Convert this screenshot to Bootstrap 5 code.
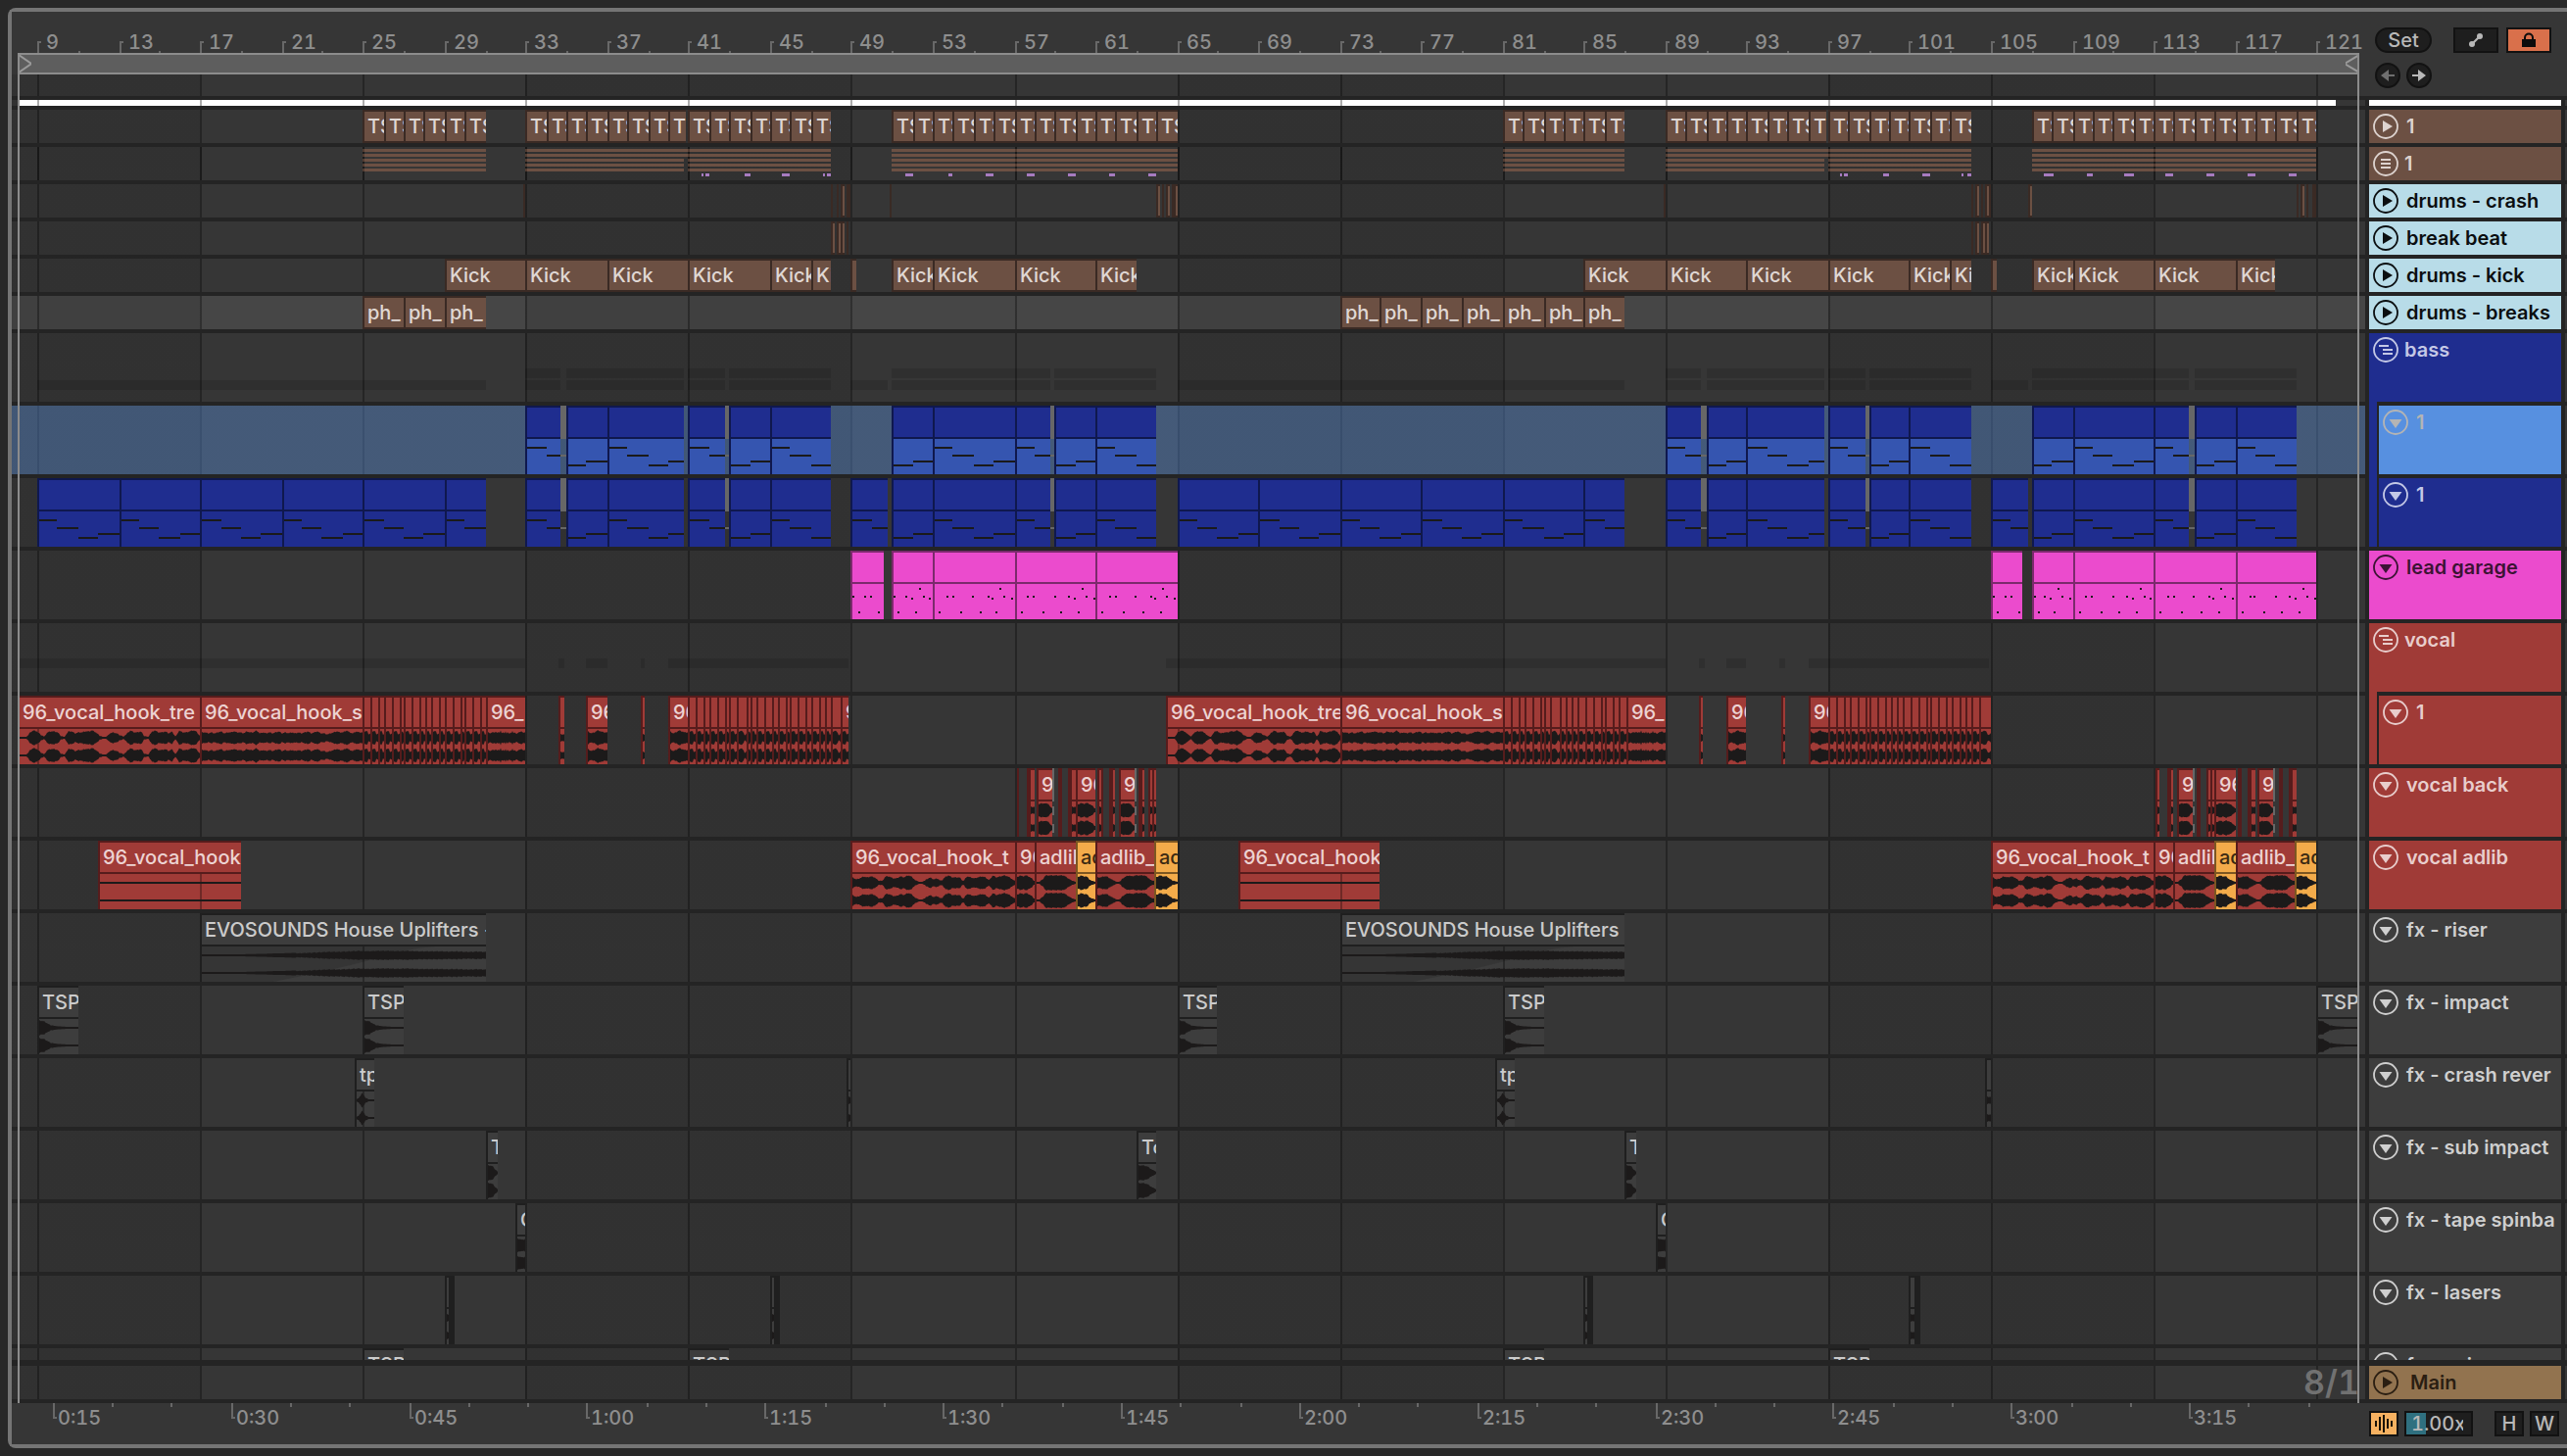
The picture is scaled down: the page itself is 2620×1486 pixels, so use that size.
<!DOCTYPE html>
<html lang="en">
<head>
<meta charset="utf-8">
<meta name="viewport" content="width=device-width, initial-scale=1">
<title>Arrangement</title>
<link rel="stylesheet" href="https://cdn.jsdelivr.net/npm/bootstrap@5.3.0/dist/css/bootstrap.min.css">
<style>
:root{--panel:#363636;--gap:#242424;--rule:#757575;--dim:#8e8e8e}
body{background:#282828;font:500 20px/24px Inter,"Noto Sans",sans-serif;color:#c4c4c4;overflow:hidden}
.shell{padding:8px 0 8px 8px}
.arrangement{border:4px solid var(--rule);border-right:0;border-radius:8px 0 0 8px;background:var(--gap);min-height:0}
.side{width:206px;flex:none;padding:0 6px 0 4px}
.canvas{min-width:0}

/* rulers */
.top-strip,.bottom-strip{background:var(--panel)}
.bars{height:42px}
.loop-brace{height:22px;margin:0 6px;background:#5e5e5e;border:solid #8c8c8c;border-width:2px 0}
.loop-brace svg{display:block;width:14px;height:18px}
.scrub{height:22px;background:var(--grid),var(--panel)}
.tick{position:absolute;width:2px;background:#686868}
.tick-label{position:absolute;color:var(--dim);white-space:nowrap;font-variant-numeric:tabular-nums}
.bars .tick{bottom:0;height:2px}
.bars .tick.major{height:12px}
.bars .tick.major::after{content:"";position:absolute;left:2px;top:0;width:2px;height:2px;background:#686868}
.bars .tick-label{top:19px}
.seconds{height:42px}
.seconds .tick{top:0;height:4px}
.seconds .tick.major{height:16px}
.seconds .tick.major::after{content:"";position:absolute;left:2px;bottom:0;width:2px;height:2px;background:#686868}
.seconds .tick-label{top:3px}
.edge-line{position:absolute;top:42px;bottom:0;width:2px;background:#8c8c8c}
.edge-start{left:6px}
.edge-end{right:212px}

/* top and bottom buttons */
.ctl{background:#1e1e1e;border:2px solid #121212;color:#b8b8b8;height:26px;padding:0;display:flex;align-items:center;justify-content:center;font:inherit;line-height:22px}
.ctl svg{display:block}
.ctl-set{width:58px;border-radius:13px}
.ctl-wide{width:46px}
.ctl-lock{background:#d9704b;color:#0c0c0c}
.ctl-round{width:26px;border-radius:50%}
.ctl-round.off{color:#6f6f6f}
.ctl-key{width:30px}
.ctl-wave{width:30px;background:#f6b161;color:#1a1206}
.rate{width:70px;height:26px;border:2px solid #121212;padding:0 8px 0 5px;text-align:right;font:inherit;font-variant-numeric:tabular-nums;line-height:22px;color:#b8b8b8;background:linear-gradient(90deg,#2f7080 20px,#1e1e1e 20px)}

/* tracks */
.tracks{min-height:0;overflow:hidden;padding-top:4px}
.track{margin-bottom:4px;flex:none}
.track.short{height:34px}
.track.tall{height:70px}
.track.thin{height:6px}
.lane{position:relative;overflow:hidden;min-width:0;background:var(--grid),var(--panel)}
.lane.lit{background:var(--grid),#464646}
.lane.picked{background:linear-gradient(rgba(90,144,220,.4),rgba(90,144,220,.4)),var(--grid),var(--panel)}
.lane .song{position:absolute;top:0;bottom:0;background:var(--lines),#fff}
.head-cell{width:100%;height:100%;padding:4px 0 0 4px;gap:8px;overflow:hidden;white-space:nowrap;background:var(--tone,#3d3d3d);color:var(--ink,#cfcfcf);box-shadow:4px 0 0 var(--gap)}
.side-edge{background:linear-gradient(270deg,var(--panel) 2px,transparent 2px)}
.head-cell .tname{line-height:26px;font-weight:600}
.head-cell.branch{gap:6px}
.nested{position:relative}
.nested .head-cell{margin-left:10px;width:auto;flex:1 1 auto}
.nested::before{content:"";position:absolute;left:4px;top:-4px;bottom:0;width:8px;background:var(--parent)}
.fold{width:26px;height:26px;flex:none;padding:0;border:0;background:none;color:inherit}
.fold svg{display:block;width:26px;height:26px}
.t-brown{--tone:#6c5043;--ink:#ddd3cf}
.t-sky{--tone:#b8dce8;--ink:#0b0e10}
.t-navy{--tone:#1f2d8f;--ink:#c4c8e6}
.t-azure{--tone:#5790e0;--ink:#b4b4b4}
.t-pink{--tone:#eb4bcd;--ink:#3c1334}
.t-red{--tone:#a03b37;--ink:#e8cdcc}
.t-gold{--tone:#92734f;--ink:#2a1e12}
.in-navy{--parent:#1f2d8f}
.in-red{--parent:#a03b37}
.t-gold .tname{padding-left:4px}
.place{position:absolute;right:6px;top:0;font-size:34px;line-height:34px;font-weight:600;font-variant-numeric:tabular-nums;color:#717171}

/* clips */
.clip{position:absolute;top:0;bottom:0;overflow:hidden;white-space:nowrap;background:var(--fill);border:solid var(--rim);border-width:2px 0 0 2px;color:var(--txt)}
.short .clip,.thin .clip{border-bottom-width:2px;line-height:30px}
.clip .cap{display:block;height:30px;line-height:30px;padding-left:3px}
.tall .clip .cap{height:32px;border-bottom:2px solid var(--rim)}
.clip svg{position:absolute;left:0;top:32px;display:block}
.k-brown{--fill:#6c5043;--rim:#3a2a24;--txt:#e0d8d4}
.k-navy{--fill:#1f2d8f;--rim:#0f184e;--txt:#c4c8e6}
.picked .k-navy{background:linear-gradient(#1f2d8f 32px,#3555b0 32px)}
.k-pink{--fill:#eb4bcd;--rim:#7b2a6c;--txt:#3c1334}
.k-red{--fill:#a03b37;--rim:#561c1c;--txt:#edd3d2}
.k-orange{--fill:#f3ab4a;--rim:#7c5622;--txt:#3b2a12}
.k-gray{--fill:#3d3d3d;--rim:#1f1f1f;--txt:#cbcbcb}
.mute{position:absolute;background:#676767}
.note{position:absolute;background:#1a1a1a;height:2px}
.ghost{position:absolute;height:10px;background:rgba(0,0,0,.12)}
.bar-line{position:absolute;height:3px;background:#6c5043}
.bar-line.hit{background:#a77bc0}
</style>
</head>
<body class="vh-100">
<svg class="d-none" aria-hidden="true">
  <symbol id="i-play" viewBox="0 0 26 26"><circle cx="13" cy="13" r="12" fill="none" stroke="currentColor" stroke-width="1.8"/><path d="M10 7v12l10-6z" fill="currentColor"/></symbol>
  <symbol id="i-open" viewBox="0 0 26 26"><circle cx="13" cy="13" r="12" fill="none" stroke="currentColor" stroke-width="1.8"/><path d="M6.500 10h13l-6.500 9z" fill="currentColor"/></symbol>
  <symbol id="i-lines" viewBox="0 0 26 26"><circle cx="13" cy="13" r="12" fill="none" stroke="currentColor" stroke-width="1.8"/><path d="M8 9h10M8 13h10M8 17h10" stroke="currentColor" stroke-width="2"/></symbol>
  <symbol id="i-group" viewBox="0 0 26 26"><circle cx="13" cy="13" r="12" fill="none" stroke="currentColor" stroke-width="1.8"/><path d="M6 9h10M10 13h10M10 17h10" stroke="currentColor" stroke-width="2"/></symbol>
</svg>

<main class="shell h-100">
<div class="arrangement d-flex flex-column h-100">
  <div class="position-relative d-flex flex-column flex-fill" style="min-height:0">
    <header class="top-strip d-flex">
      <div class="canvas flex-fill">
        <div class="bars position-relative" id="bars"></div>
        <div class="loop-brace d-flex justify-content-between">
          <svg viewBox="0 0 14 18" aria-hidden="true"><path d="M1 0l13 9-13 9" fill="none" stroke="#9a9a9a" stroke-width="2"/></svg>
          <svg viewBox="0 0 14 18" aria-hidden="true"><path d="M14 0L-1 9l15 9" fill="none" stroke="#9a9a9a" stroke-width="2"/></svg>
        </div>
        <div class="scrub"></div>
      </div>
      <div class="side d-flex flex-column" style="gap:10px;padding:16px 16px 0 10px">
        <div class="d-flex">
          <button class="ctl ctl-set" type="button">Set</button>
          <button class="ctl ctl-wide ms-auto me-2" type="button" aria-label="Automation mode"><svg width="16" height="16" viewBox="0 0 16 16"><path d="M4 12L12 4" stroke="currentColor" stroke-width="2.200"/><circle cx="4" cy="12" r="3" fill="currentColor"/><circle cx="12" cy="4" r="3" fill="currentColor"/></svg></button>
          <button class="ctl ctl-wide ctl-lock" type="button" aria-label="Lock envelopes"><svg width="16" height="16" viewBox="0 0 16 16"><path d="M4 8V5.500a4 4 0 0 1 8 0V8" fill="none" stroke="currentColor" stroke-width="2"/><path d="M1 7h14v8H1z" fill="currentColor"/></svg></button>
        </div>
        <div class="d-flex" style="gap:6px">
          <button class="ctl ctl-round off" type="button" aria-label="Previous locator"><svg width="16" height="14" viewBox="0 0 16 14"><path d="M1 7l8-6v5h6v2H9v5z" fill="currentColor"/></svg></button>
          <button class="ctl ctl-round" type="button" aria-label="Next locator"><svg width="16" height="14" viewBox="0 0 16 14"><path d="M15 7L7 1v5H1v2h6v5z" fill="currentColor"/></svg></button>
        </div>
      </div>
    </header>

    <section class="tracks flex-fill d-flex flex-column" aria-label="Tracks">
      <div class="track thin d-flex"><div class="lane flex-fill" data-lane="song"></div><div class="side side-edge"><div class="head-cell bg-white"></div></div></div>
      <div class="track short d-flex"><div class="lane flex-fill" data-lane="tops"></div><div class="side side-edge"><div class="head-cell t-brown d-flex"><button class="fold" type="button" aria-label="Unfold 1"><svg><use href="#i-play"/></svg></button><span class="tname">1</span></div></div></div>
      <div class="track short d-flex"><div class="lane flex-fill" data-lane="drums"></div><div class="side side-edge"><div class="head-cell branch t-brown d-flex"><button class="fold" type="button" aria-label="Unfold group 1"><svg><use href="#i-lines"/></svg></button><span class="tname">1</span></div></div></div>
      <div class="track short d-flex"><div class="lane flex-fill" data-lane="crash"></div><div class="side side-edge"><div class="head-cell t-sky d-flex"><button class="fold" type="button" aria-label="Unfold drums - crash"><svg><use href="#i-play"/></svg></button><span class="tname">drums - crash</span></div></div></div>
      <div class="track short d-flex"><div class="lane flex-fill" data-lane="beat"></div><div class="side side-edge"><div class="head-cell t-sky d-flex"><button class="fold" type="button" aria-label="Unfold break beat"><svg><use href="#i-play"/></svg></button><span class="tname">break beat</span></div></div></div>
      <div class="track short d-flex"><div class="lane flex-fill" data-lane="kick"></div><div class="side side-edge"><div class="head-cell t-sky d-flex"><button class="fold" type="button" aria-label="Unfold drums - kick"><svg><use href="#i-play"/></svg></button><span class="tname">drums - kick</span></div></div></div>
      <div class="track short d-flex"><div class="lane lit flex-fill" data-lane="breaks"></div><div class="side side-edge"><div class="head-cell t-sky d-flex"><button class="fold" type="button" aria-label="Unfold drums - breaks"><svg><use href="#i-play"/></svg></button><span class="tname">drums - breaks</span></div></div></div>
      <div class="track tall d-flex"><div class="lane flex-fill" data-lane="bass"></div><div class="side side-edge"><div class="head-cell branch t-navy d-flex"><button class="fold" type="button" aria-label="Fold bass"><svg><use href="#i-group"/></svg></button><span class="tname">bass</span></div></div></div>
      <div class="track tall d-flex"><div class="lane picked flex-fill" data-lane="bassA"></div><div class="side side-edge nested in-navy d-flex"><div class="head-cell t-azure d-flex"><button class="fold" type="button" aria-label="Fold bass 1"><svg><use href="#i-open"/></svg></button><span class="tname">1</span></div></div></div>
      <div class="track tall d-flex"><div class="lane flex-fill" data-lane="bassB"></div><div class="side side-edge nested in-navy d-flex"><div class="head-cell t-navy d-flex"><button class="fold" type="button" aria-label="Fold bass 1, second"><svg><use href="#i-open"/></svg></button><span class="tname">1</span></div></div></div>
      <div class="track tall d-flex"><div class="lane flex-fill" data-lane="lead"></div><div class="side side-edge"><div class="head-cell t-pink d-flex"><button class="fold" type="button" aria-label="Fold lead garage"><svg><use href="#i-open"/></svg></button><span class="tname">lead garage</span></div></div></div>
      <div class="track tall d-flex"><div class="lane flex-fill" data-lane="vocal"></div><div class="side side-edge"><div class="head-cell branch t-red d-flex"><button class="fold" type="button" aria-label="Fold vocal"><svg><use href="#i-group"/></svg></button><span class="tname">vocal</span></div></div></div>
      <div class="track tall d-flex"><div class="lane flex-fill" data-lane="vocalA"></div><div class="side side-edge nested in-red d-flex"><div class="head-cell t-red d-flex"><button class="fold" type="button" aria-label="Fold vocal 1"><svg><use href="#i-open"/></svg></button><span class="tname">1</span></div></div></div>
      <div class="track tall d-flex"><div class="lane flex-fill" data-lane="back"></div><div class="side side-edge"><div class="head-cell t-red d-flex"><button class="fold" type="button" aria-label="Fold vocal back"><svg><use href="#i-open"/></svg></button><span class="tname">vocal back</span></div></div></div>
      <div class="track tall d-flex"><div class="lane flex-fill" data-lane="adlib"></div><div class="side side-edge"><div class="head-cell t-red d-flex"><button class="fold" type="button" aria-label="Fold vocal adlib"><svg><use href="#i-open"/></svg></button><span class="tname">vocal adlib</span></div></div></div>
      <div class="track tall d-flex"><div class="lane flex-fill" data-lane="riser"></div><div class="side side-edge"><div class="head-cell d-flex"><button class="fold" type="button" aria-label="Fold fx - riser"><svg><use href="#i-open"/></svg></button><span class="tname">fx - riser</span></div></div></div>
      <div class="track tall d-flex"><div class="lane flex-fill" data-lane="impact"></div><div class="side side-edge"><div class="head-cell d-flex"><button class="fold" type="button" aria-label="Fold fx - impact"><svg><use href="#i-open"/></svg></button><span class="tname">fx - impact</span></div></div></div>
      <div class="track tall d-flex"><div class="lane flex-fill" data-lane="rever"></div><div class="side side-edge"><div class="head-cell d-flex"><button class="fold" type="button" aria-label="Fold fx - crash reverse"><svg><use href="#i-open"/></svg></button><span class="tname">fx - crash rever</span></div></div></div>
      <div class="track tall d-flex"><div class="lane flex-fill" data-lane="sub"></div><div class="side side-edge"><div class="head-cell d-flex"><button class="fold" type="button" aria-label="Fold fx - sub impact"><svg><use href="#i-open"/></svg></button><span class="tname">fx - sub impact</span></div></div></div>
      <div class="track tall d-flex"><div class="lane flex-fill" data-lane="tape"></div><div class="side side-edge"><div class="head-cell d-flex"><button class="fold" type="button" aria-label="Fold fx - tape spinback"><svg><use href="#i-open"/></svg></button><span class="tname">fx - tape spinba</span></div></div></div>
      <div class="track tall d-flex"><div class="lane flex-fill" data-lane="lasers"></div><div class="side side-edge"><div class="head-cell d-flex"><button class="fold" type="button" aria-label="Fold fx - lasers"><svg><use href="#i-open"/></svg></button><span class="tname">fx - lasers</span></div></div></div>
      <div class="track tall d-flex"><div class="lane flex-fill" data-lane="snap"></div><div class="side side-edge"><div class="head-cell d-flex"><button class="fold" type="button" aria-label="Fold fx - snip"><svg><use href="#i-open"/></svg></button><span class="tname">fx - snip</span></div></div></div>
    </section>

    <div class="track short d-flex" style="margin-top:6px"><div class="lane flex-fill"><span class="place">8/1</span></div><div class="side side-edge"><div class="head-cell t-gold d-flex"><button class="fold" type="button" aria-label="Unfold Main"><svg><use href="#i-play"/></svg></button><span class="tname">Main</span></div></div></div>
    <span class="edge-line edge-start"></span><span class="edge-line edge-end"></span>
  </div>

  <footer class="bottom-strip d-flex">
    <div class="canvas seconds position-relative flex-fill" id="seconds"></div>
    <div class="side d-flex" style="gap:6px;padding:8px 8px 0 4px">
      <button class="ctl ctl-wave" type="button" aria-label="Audio"><svg width="20" height="18" viewBox="0 0 20 18"><path d="M2 6v6M6 2v14M10 0v18M14 4v10M18 6v6" stroke="currentColor" stroke-width="2"/></svg></button>
      <input class="rate" type="text" value="1.00x" aria-label="Playback rate">
      <button class="ctl ctl-key ms-auto" type="button">H</button>
      <button class="ctl ctl-key" type="button">W</button>
    </div>
  </footer>
</div>
</main>

<script src="https://cdn.jsdelivr.net/npm/bootstrap@5.3.0/dist/js/bootstrap.bundle.min.js"></script>
<script>
// Positions are in bars; the view shows bar 7.7 to bar 123.4 across a lane.
const every = (from, to, step, label) => {
  const out = [];
  for (let b = from; b < to; b += step) out.push([b, Math.min(b + step, to), label]);
  return out;
};
const twice = list => list.concat(list.map(([a, b, ...r]) => [a + 56, b + 56, ...r]));
const sixteenths = (bar, list) => list.map(([a, b, ...r]) => [bar + a / 16, bar + b / 16, ...r]);

const slicePoints = [0,6,12,17,23,29,32,38,45,49,54,59,65,71,77,80,86,92,97,103,108,112,119];
const slices = (bar, end, label) => {
  const pts = slicePoints.map(p => bar + p / 16).filter(p => p < end - .1).concat(end);
  return pts.slice(0, -1).map((p, i) => [p, pts[i + 1], i === pts.length - 2 && label || '', 'slice']);
};

// waveform envelopes, 0 to 8 pixels each side of the channel's centre
const shapes = {
  intro: [.6,.6,.6,6,8,7,4,1,6,7,7,6,2,.7,7,7,5,6,6,7,7,8,6,3,.7,.7,5,6,5,3,1,5,8,6,6,7,2,1,6,8,6,6,7,5,7,1,8,6,6,7,8,7,2],
  hook: [6,4,5,7,6,7,6,3,2,7,7,5,5,7,6,8,7,3,1,1,4,6,4,5,2,6,8,6,6,6,2,7,6,5,6,7,6,3,8,6,7,8,7,5,2],
  dense: [6,6,5,6,5,6,7,5,6,6,7,6,6,5,7,6,6,8,5,6,5,6,5,6,7,5,6,5,6,5,6,5,6,7,5,6,7,5,5,4,5,6,7,6,6,8,6,5,7,6,6],
  short: [7,5,6,8,7,6,6],
  slice: [6,8,7,3,5],
  stub: [4,4],
  back: [6,8,7,8,7,5,2],
  yell: [1,1,4,8,8,8,8,8,8,8,6,4,2,1],
  yell2: [6,6,7,7,5,3,1,1,5,7,8,7,8,8,8,8,6,3,2],
  orange: [6,8,7,7,4,2,1],
  flat: [1,1],
  rise: [.6,.7,.8,1,1,1.3,1.4,1.8,2,2.3,2.6,3,3.5,4,4,4.4,5,4.6,5,5,4.7,5,4.6,4.5,4.6,4.3,4.4,4,4.2,4],
  hit: [8,7,4,2,1.5,1.2,1,1,1],
  tail: [1,4,8,3,1,1,1],
  boom: [8,8,7,4,1],
  spin: [7,7,6,7]
};

const topsHalf = [...every(25,31,1,'TS'), ...every(33,40,1,'TS'), [40,40.9,'T'], ...every(41,48,1,'TS')];
const kickHalf = [[29,33,'Kick'],[33,37,'Kick'],[37,41,'Kick'],[41,45,'Kick'],[45,47,'Kick'],[47,48,'Ki'],[49,49.25,''],
  [51,53,'Kick'],[53,57,'Kick'],[57,61,'Kick'],[61,63,'Kick']];
const riff = [[33,34.74],[35,37],[37,40.8],[41,42.8],[43,45],[45,48],[51,53],[53,57],[57,58.76],[59,61],[61,64]];
const riffMuted = [[34.74,35],[42.8,43],[58.76,59]];
const leadHalf = [[49,50.55],[51,53],[53,57],[57,61],[61,65]];
const adlibHalf = [[12,19,'96_vocal_hook','flat'],[49,57,'96_vocal_hook_t','hook'],[57,58,'96','back'],[58,60,'adlib','yell'],
  [60,61,'ad','orange','orange'],[61,63.9,'adlib_','yell2'],[63.9,65,'ad','orange','orange']];

const lanes = {
  tops: {kind:'brown', clips:[...topsHalf, ...every(51,65,1,'TS'), ...topsHalf.map(([a,b,l]) => [a+56,b+56,l]), ...every(107,121,1,'TS')]},
  kick: {kind:'brown', clips:twice(kickHalf)},
  breaks: {kind:'brown', clips:[...every(25,31,2,'ph_'), ...every(73,87,2,'ph_')]},
  crash: {kind:'brown', clips:[[32.9,33],[48,48.1],[48.3,48.4],[48.5,48.7],[48.8,48.9],[48.9,49],[50.9,51],
    [64,64.2],[64.3,64.4],[64.5,64.7],[64.75,64.85],[64.85,65],[88.9,89],[104,104.1],[104.23,104.43],[104.53,104.62],[104.72,104.91],[104.91,105],
    [106.83,107],[120,120.1],[120.22,120.41],[120.5,120.6],[120.8,120.9],[120.9,121]]},
  beat: {kind:'brown', clips:[[48,48.2],[48.3,48.5],[48.5,48.7],[48.8,48.9],[104,104.1],[104.23,104.43],[104.53,104.72],[104.72,104.91]]},
  bassA: {kind:'navy', clips:twice(riff), muted:twice(riffMuted), notes:'riff'},
  bassB: {kind:'navy', clips:[...every(9,31,4), ...every(65,87,4), ...twice([...riff,[49,50.8]])], muted:twice(riffMuted), notes:'riff'},
  lead: {kind:'pink', clips:twice(leadHalf), notes:'lead'},
  vocalA: {kind:'red', clips:[[7.7,17,'96_vocal_hook_tre','intro'],[17,25,'96_vocal_hook_s','dense'],...slices(25,31.06),[31.06,33,'96_','dense'],
    [34.65,34.9,'','stub'],[36,37,'96','short'],[38.65,38.85,'','stub'],[40,41,'96','short'],...slices(41,48.9,'9'),
    [64.45,73,'96_vocal_hook_tre','intro'],[73,81,'96_vocal_hook_s','dense'],...slices(81,87.06),[87.06,89,'96_','dense'],
    [90.7,90.85,'','stub'],[92,93,'96','short'],[94.7,94.85,'','stub'],[96.05,97,'96','short'],...slices(97,105)]},
  back: {kind:'red', clips:[
    ...sixteenths(57.04, [[1.5,3],[9,11],[11,15.5,'','stub'],[17,29,'96','back'],[34,35.5],[35.5,37],[41.5,43],[43,48,'','stub'],[48,63,'96','back'],
      [65,68,'','stub'],[68,69.5],[74,75.5],[75.5,78.5,'','stub'],[81.5,94,'96','back'],[97,98.5],[98.5,101.5,'','stub'],[105,108,'','stub'],[108,111,'','stub']]),
    ...sixteenths(113, [[1.5,4.5,'','stub'],[11,12.5],[12.5,15.5,'','stub'],[18.5,31,'96','back'],[34,35.5],[35.5,37],[41.5,44.5,'','stub'],[44.5,48,'','stub'],
      [48,65,'96','back'],[66,68],[68,69.5],[74,75.5],[75.5,80,'','stub'],[81.5,94,'96','back'],[98.5,100],[100,101.5],[106,108],[108,112.5,'','stub']])],
    muted:[...sixteenths(57.04,[[29,31],[94,96]]), ...sixteenths(113,[[31,32.5],[94,95.5]])]},
  adlib: {kind:'red', clips:twice(adlibHalf)},
  riser: {kind:'gray', clips:twice([[17,31,'EVOSOUNDS House Uplifters -','rise']])},
  impact: {kind:'gray', clips:[9,25,65,81,121].map(b => [b,b+2,'TSP','hit'])},
  rever: {kind:'gray', clips:twice([[24.6,25.6,'tp','tail'],[48.75,49,'','stub']])},
  sub: {kind:'gray', clips:[[31,31.6,'T','boom'],[63,64,'To','boom'],[87,87.6,'T','boom']]},
  tape: {kind:'gray', clips:twice([[32.5,33,'C','spin']])},
  lasers: {kind:'gray', clips:[29,45,85,101].flatMap(b => [[b,b+.2,'','stub'],[b+.2,b+.3],[b+.3,b+.4],[b+.4,b+.5]])},
  snap: {kind:'gray', clips:[25,41,81,97].map(b => [b,b+2,'TSP','hit'])}
};
// clip outlines shown on the group tracks: start, end, top
const ghostRows = {
  bass: [...twice(riff).map(r => [...r, 36]), ...[...twice([...riff,[49,50.8]]),[9,31],[65,87]].map(r => [...r, 48])],
  vocal: [[7.7,33],[64.45,89],...twice([[34.65,34.9],[36,37],[38.65,38.85],[40,48.9]])].map(r => [...r, 36])
};
const riffRows = [42,50,60,56];
const leadRows = [[.67,46],[.92,46],[1.93,46],[2.65,46],[3.5,46],[3.28,38],[2.9,48],[3.85,48],[.3,62],[1.35,62],[2.3,62],[3.13,62]];

function draw() {
  const probe = document.querySelector('[data-lane="song"]');
  const width = probe.clientWidth, unit = width / 2402 * 10.384;
  const X = bar => Math.max(6, 2 * Math.round(19.1 + (bar - 9) * unit) - 12);
  const el = (parent, cls, css, text) => {
    const n = document.createElement('span');
    n.className = cls; n.style.cssText = css;
    if (text) n.textContent = text;
    parent.append(n);
    return n;
  };
  const gridBars = [];
  for (let b = 9; b <= 121; b += 8) gridBars.push(b);

  // grid backgrounds: a line each 8 bars, a shade on alternate 16-bar blocks
  const line = 'rgba(0,0,0,.32)', stops = [], shade = [];
  gridBars.forEach(b => stops.push(`transparent ${X(b)}px,${line} ${X(b)}px,${line} ${X(b)+2}px,transparent ${X(b)+2}px`));
  for (let b = 1; b < 124; b += 32) {
    const a = b < 9 ? 0 : X(b), z = X(b + 16);
    shade.push(`transparent ${a}px,rgba(0,0,0,.09) ${a}px,rgba(0,0,0,.09) ${z}px,transparent ${z}px`);
  }
  const lines = `linear-gradient(90deg,${stops.join()})`;
  document.body.style.setProperty('--lines', lines);
  document.body.style.setProperty('--grid', `${lines},linear-gradient(90deg,${shade.join()})`);

  const bars = document.getElementById('bars'), secs = document.getElementById('seconds');
  bars.replaceChildren(); secs.replaceChildren();
  for (let b = 9; b <= 121; b += 2) {
    const major = (b - 9) % 4 === 0;
    el(bars, 'tick' + (major ? ' major' : ''), `left:${X(b)}px`);
    if (major) el(bars, 'tick-label', `left:${X(b)+9}px`, String(b));
  }
  for (let s = 15; s <= 205; s += 5) {
    const x = X(1 + s * 7 / 12), major = s % 15 === 0;
    el(secs, 'tick' + (major ? ' major' : ''), `left:${x}px`);
    if (major) el(secs, 'tick-label', `left:${x+5}px`, Math.floor(s/60) + ':' + String(s%60).padStart(2,'0'));
  }

  const wave = (a, z, shape) => {
    const w = z - a - 2, env = shapes[shape];
    let body = '';
    if (shape === 'rise') body += `<path d="M0 36H${w/4}Q${w*.5} 22 ${w*.65} 9T${w} 0H0z" fill="#353535"/>`;
    gridBars.map(X).filter(x => x > a && x < z).forEach(x => body += `<rect x="${x-a-2}" width="2" height="36" fill="#000" opacity=".3"/>`);
    [9, 27].forEach(c => {
      const up = [], down = [], n = Math.max(2, w);
      for (let i = 0; i <= n; i++) {
        const p = i / n * (env.length - 1), k = Math.floor(p), f = p - k;
        const raw = env[k] * (1 - f) + (env[k + 1] ?? env[k]) * f;
        const v = Math.max(1, raw - (raw > 2.5 ? (i * 7 % 5) * .25 : 0));
        up.push(`${i * w / n} ${(c - v).toFixed(1)}`);
        down.unshift(`${i * w / n} ${(c + v).toFixed(1)}`);
      }
      body += `<path d="M${up.concat(down).join('L')}z" fill="#1c1a1a"/>`;
    });
    return `<svg width="${w}" height="36" aria-hidden="true">${body}</svg>`;
  };

  document.querySelectorAll('[data-lane]').forEach(lane => {
    const name = lane.dataset.lane;
    lane.replaceChildren();
    if (name === 'song') el(lane, 'song', `left:8px;width:${X(122)-8}px;background-position:-8px 0`);
    if (name === 'drums') {
      twice([[25,31],[33,48],[51,65]]).forEach(([a,b]) => {
        for (let i = 0; i < 5; i++) {
          const cut = i > 1 && b - a === 15 ? [[a,a+7.8],[a+8,b]] : [[a,b]];
          cut.forEach(([p,q]) => el(lane, 'bar-line', `left:${X(p)}px;width:${X(q)-X(p)}px;top:${2+i*5}px`));
        }
      });
      twice([[41.62,41.72],[41.8,42],[43.75,44],[45.6,46],[47.6,47.7],[47.8,48],[51.64,52.04],[53.75,54],[55.6,56],[57.6,58],[59.6,60],[61.65,62],[63.6,64]])
        .forEach(([a,b]) => el(lane, 'bar-line hit', `left:${X(a)}px;width:${X(b)-X(a)}px;top:27px`));
      gridBars.map(X).forEach(x => el(lane, 'tick', `left:${x}px;top:0;bottom:0;background:rgba(0,0,0,.25)`));
    }
    (ghostRows[name] || []).forEach(([a,b,y]) => el(lane, 'ghost', `left:${X(a)}px;width:${X(b)-X(a)}px;top:${y}px`));
    const def = lanes[name];
    if (!def) return;
    def.clips.forEach(([a, b, label, shape, kind]) => {
      const x = X(a), z = X(b);
      const clip = el(lane, 'clip k-' + (kind || def.kind), `left:${x}px;width:${Math.max(2, z-x)}px`);
      if (z - x > 2) el(clip, 'cap', '', label || '');
      if (shape) clip.insertAdjacentHTML('beforeend', wave(x, z, shape));
    });
    (def.muted || []).forEach(([a,b]) => {
      el(lane, 'mute', `left:${X(a)}px;width:${X(b)-X(a)}px;top:0;height:34px`);
      if (name === 'back') [39,57].forEach(y => el(lane, 'mute', `left:${X(a)}px;width:${X(b)-X(a)}px;top:${y}px;height:9px`));
      else el(lane, 'mute', `left:${X(a)}px;width:${X(b)-X(a)}px;top:50px;height:2px`);
    });
    if (def.notes) def.clips.forEach(([a, b]) => {
      if (def.notes === 'riff') {
        for (let n = Math.floor(a); n < b; n++) {
          const p = n === a ? X(n) + 2 : X(n), q = Math.min(X(n+1), X(b));
          el(lane, 'note', `left:${p}px;width:${q-p}px;top:${riffRows[(n-1)%4]}px`);
        }
      } else {
        for (let n = a - (a-1)%4; n < b; n += 4) leadRows.forEach(([o,y]) => {
          if (n+o >= a && n+o < b) el(lane, 'note', `left:${X(n+o)}px;width:2px;top:${y}px`);
        });
        if ((a-1)%4 === 2 || b - a < 2) el(lane, 'note', `left:${X(a)+2}px;width:2px;top:46px`);
      }
    });
  });
}
draw();
addEventListener('resize', draw);
</script>
</body>
</html>
